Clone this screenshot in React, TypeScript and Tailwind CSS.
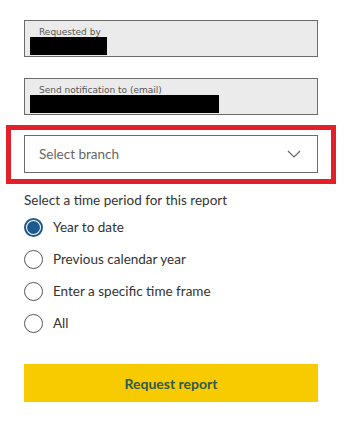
import { useState } from "react";

const options = [
  "Year to date",
  "Previous calendar year",
  "Enter a specific time frame",
  "All",
];

function ReadOnlyField({ label, barWidth }: { label: string; barWidth: string }) {
  return (
    <div className="h-[37px] border border-[#6b6b6b] bg-[#ebebeb] pl-[5px] pt-[6px]">
      <div className="pl-[9px] text-[9px] leading-[10px] text-[#555] [font-family:'DejaVu_Sans',sans-serif]">
        {label}
      </div>
      <div className={`h-[18px] bg-black ${barWidth}`} />
    </div>
  );
}

export default function App() {
  const [period, setPeriod] = useState(0);

  return (
    <div className="w-[345px] h-[426px] bg-white pl-6 pr-[27px] pt-5 [font-family:Lato,'Noto_Sans',sans-serif] text-[#333]">
      <ReadOnlyField label="Requested by" barWidth="w-[77px]" />
      <div className="mt-[21px]">
        <ReadOnlyField label="Send notification to (email)" barWidth="w-[189px]" />
      </div>

      {/* highlighted branch selector */}
      <div className="-mx-[18px] mt-[10px] border-[5px] border-[#e3202a] px-[13px] pt-[5px] pb-[6px]">
        <div className="flex h-[38px] items-center justify-between border border-[#6b6b6b] bg-white pl-[14px] pr-[16px]">
          <span className="text-[13.5px] text-[#666]">Select branch</span>
          <svg width="14" height="8" viewBox="0 0 14 8" fill="none">
            <path d="M1 1l6 6 6-6" stroke="#666" strokeWidth="1.2" />
          </svg>
        </div>
      </div>

      <div className="mt-[7px] text-[13.5px] leading-[18px] text-[#333]">
        Select a time period for this report
      </div>

      <div className="mt-[2px] flex flex-col">
        {options.map((opt, i) => (
          <label
            key={opt}
            className="flex h-[32px] cursor-pointer items-center gap-[10px] text-[13.5px] text-[#333]"
            onClick={() => setPeriod(i)}
          >
            <span
              className={
                period === i
                  ? "flex h-[19px] w-[19px] items-center justify-center rounded-full border-2 border-[#1f5a8f]"
                  : "h-[19px] w-[19px] rounded-full border border-[#555]"
              }
            >
              {period === i && <span className="h-[13px] w-[13px] rounded-full bg-[#1f5a8f]" />}
            </span>
            {opt}
          </label>
        ))}
      </div>

      <button className="mt-[25px] h-[38px] w-full bg-[#f7cb00] text-[14px] font-bold text-[#2e5b4e]">
        Request report
      </button>
    </div>
  );
}
